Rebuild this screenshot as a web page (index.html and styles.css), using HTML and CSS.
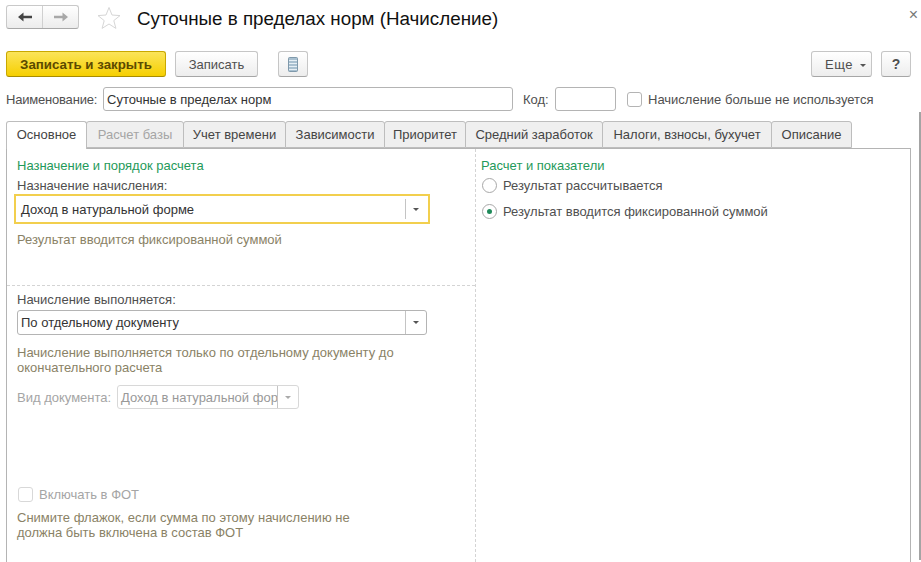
FILE: index.html
```html
<!DOCTYPE html>
<html lang="ru">
<head>
    <meta charset="UTF-8">
    <meta name="viewport" content="width=device-width, initial-scale=1.0">
    <title>Суточные в пределах норм (Начисление)</title>
    <link rel="stylesheet" href="styles.css">
</head>
<body>
    <div class="edge-bar"></div>
    <div class="form">
        <div class="title-row">
            <div class="nav-group">
                <button class="nav-btn">
                    <svg width="16" height="12" viewBox="0 0 16 12"><path d="M1 6 L6.5 1.5 V4.8 H15 V7.2 H6.5 V10.5 Z" fill="#444"/></svg>
                </button>
                <button class="nav-btn">
                    <svg width="16" height="12" viewBox="0 0 16 12"><path d="M15 6 L9.5 1.5 V4.8 H1 V7.2 H9.5 V10.5 Z" fill="#a8a8a8"/></svg>
                </button>
            </div>
            <svg class="star" width="24" height="24" viewBox="0 0 24 24"><path d="M12 1.5 L15 9 L23 9.6 L16.8 14.6 L18.9 22.4 L12 18 L5.1 22.4 L7.2 14.6 L1 9.6 L9 9 Z" fill="#fff" stroke="#d6d6d6"/></svg>
            <h1>Суточные в пределах норм (Начисление)</h1>
            <span class="close">×</span>
        </div>

        <div class="toolbar">
            <button class="btn btn-primary">Записать и закрыть</button>
            <button class="btn btn-save">Записать</button>
            <button class="btn btn-icon">
                <svg width="10" height="15" viewBox="0 0 10 15">
                    <rect x="0.5" y="0.5" width="9" height="14" rx="1" fill="#a9c0d0" stroke="#7f99ab"/>
                    <path d="M1 3.5 H9 M1 6.5 H9 M1 9.5 H9 M1 12.5 H9" stroke="#e6eff5"/>
                </svg>
            </button>
            <div class="spacer"></div>
            <button class="btn btn-more">Еще <span class="caret"></span></button>
            <button class="btn btn-help">?</button>
        </div>

        <div class="name-row">
            <label class="name-label">Наименование:</label>
            <input class="input input-name" type="text" value="Суточные в пределах норм">
            <label class="code-label">Код:</label>
            <input class="input input-code" type="text">
            <span class="box box-unused"></span>
            <span class="unused-text">Начисление больше не используется</span>
        </div>

        <div class="tabs">
            <div class="tab tab-active w1">Основное</div>
            <div class="tab tab-off w2">Расчет базы</div>
            <div class="tab w3">Учет времени</div>
            <div class="tab w4">Зависимости</div>
            <div class="tab w5">Приоритет</div>
            <div class="tab w6">Средний заработок</div>
            <div class="tab w7">Налоги, взносы, бухучет</div>
            <div class="tab w8">Описание</div>
        </div>

        <div class="panel">
            <div class="col-left">
                <div class="group-top">
                    <div class="heading">Назначение и порядок расчета</div>
                    <div class="field-label">Назначение начисления:</div>
                    <div class="select select-focus">
                        <span class="select-text">Доход в натуральной форме</span>
                        <span class="select-arrow"><span class="caret"></span></span>
                    </div>
                    <div class="hint hint-first">Результат вводится фиксированной суммой</div>
                </div>
                <div class="group-mid">
                    <div class="field-label">Начисление выполняется:</div>
                    <div class="select select-plain">
                        <span class="select-text">По отдельному документу</span>
                        <span class="select-arrow"><span class="caret"></span></span>
                    </div>
                    <div class="hint hint-doc">Начисление выполняется только по отдельному документу до окончательного расчета</div>
                    <div class="doc-row">
                        <span class="doc-label">Вид документа:</span>
                        <div class="select select-off">
                            <span class="select-text">Доход в натуральной форме</span>
                            <span class="select-arrow"><span class="caret"></span></span>
                        </div>
                    </div>
                    <div class="fot-row">
                        <span class="box box-off"></span>
                        <span class="fot-label">Включать в ФОТ</span>
                    </div>
                    <div class="hint hint-fot">Снимите флажок, если сумма по этому начислению не должна быть включена в состав ФОТ</div>
                </div>
            </div>
            <div class="col-right">
                <div class="heading">Расчет и показатели</div>
                <div class="radio-row radio-one"><span class="radio"></span>Результат рассчитывается</div>
                <div class="radio-row radio-two"><span class="radio radio-on"></span>Результат вводится фиксированной суммой</div>
            </div>
        </div>
    </div>
</body>
</html>
```

FILE: styles.css
```css
html, body {
    height: 100%;
    overflow: hidden;
}

body {
    margin: 0;
    background-color: white;
    font-family: "Liberation Sans", Arial, sans-serif;
    font-size: 13px;
    color: #4f4f4f;
}

.edge-bar {
    position: absolute;
    top: 112px;
    right: 0;
    bottom: 2px;
    width: 2px;
    background: #a4a4a4;
}

.form {
    padding: 5px 10px 0 6px;
}

.title-row {
    display: flex;
    align-items: center;
    height: 29px;
}

.nav-group {
    display: flex;
    width: 73px;
    height: 24px;
    margin-top: -5px;
    box-sizing: border-box;
    border: 1px solid #c9c9c9;
    border-bottom-color: #a8a8a8;
    border-radius: 3px;
    background: linear-gradient(#ffffff, #ececec);
}

.nav-btn {
    flex: 1;
    padding: 0;
    border: none;
    background: none;
    display: flex;
    align-items: center;
    justify-content: center;
}

.nav-btn + .nav-btn {
    border-left: 1px solid #d0d0d0;
}

.star {
    margin: -3px 0 0 18px;
}

h1 {
    margin: -1px 0 0 16px;
    font-size: 18.8px;
    font-weight: normal;
    color: #111;
}

.close {
    position: absolute;
    top: 6px;
    right: 3px;
    font-size: 16px;
    color: #777;
}

.toolbar {
    display: flex;
    margin-top: 17px;
    height: 26px;
}

.spacer {
    flex: 1;
}

.btn {
    box-sizing: border-box;
    height: 26px;
    padding: 0;
    border: 1px solid #c6c6c6;
    border-bottom-color: #a6a6a6;
    border-radius: 3px;
    background: linear-gradient(#ffffff, #ededed);
    font-family: inherit;
    font-size: 13px;
    color: #4f4f4f;
}

.btn-primary {
    width: 160px;
    border-color: #c9a800;
    border-bottom-color: #a88c00;
    background: linear-gradient(#fbe45a, #f6cf00);
    font-weight: bold;
    font-size: 13.3px;
    color: #5c4a00;
}

.btn-save {
    width: 83px;
    margin-left: 9px;
}

.btn-icon {
    width: 30px;
    margin-left: 20px;
    display: flex;
    align-items: center;
    justify-content: center;
}

.btn-more {
    width: 61px;
    padding-left: 13px;
    text-align: left;
    letter-spacing: 0.5px;
}

.btn-more .caret {
    margin-left: 3px;
}

.btn-help {
    width: 30px;
    margin-left: 9px;
    font-weight: bold;
    font-size: 14px;
}

.caret {
    display: inline-block;
    border-left: 3px solid transparent;
    border-right: 3px solid transparent;
    border-top: 3px solid #555;
    vertical-align: middle;
}

.name-row {
    display: flex;
    align-items: center;
    margin-top: 10px;
    height: 24px;
}

.name-label {
    width: 97px;
    letter-spacing: -0.2px;
}

.input {
    box-sizing: border-box;
    height: 24px;
    padding: 0 3px;
    border: 1px solid #b4b4b4;
    border-radius: 3px;
    font-family: inherit;
    font-size: 13px;
    color: #333;
}

.input-name {
    width: 410px;
}

.code-label {
    margin-left: 10px;
    width: 32px;
}

.input-code {
    width: 61px;
}

.box {
    box-sizing: border-box;
    width: 15px;
    height: 15px;
    border: 1px solid #b4b4b4;
    border-radius: 3px;
    background: white;
    flex: none;
}

.box-unused {
    margin-left: 11px;
}

.unused-text {
    margin-left: 6px;
}

.tabs {
    display: flex;
    margin-top: 10px;
    height: 27px;
}

.tab {
    box-sizing: border-box;
    height: 27px;
    margin-right: -1px;
    border: 1px solid #bdbdbd;
    border-radius: 3px 3px 0 0;
    background: #efefef;
    text-align: center;
    line-height: 25px;
    color: #444;
}

.tab-active {
    position: relative;
    z-index: 1;
    height: 28px;
    background: white;
    border-bottom: none;
}

.tab-off {
    color: #a5a5a5;
}

.w1 { width: 81px; }
.w2 { width: 98px; }
.w3 { width: 103px; }
.w4 { width: 100px; }
.w5 { width: 82px; }
.w6 { width: 138px; }
.w7 { width: 170px; }
.w8 { width: 81px; }

.panel {
    display: flex;
    box-sizing: border-box;
    height: 440px;
    border: 1px solid #b4b4b4;
}

.col-left {
    box-sizing: border-box;
    width: 469px;
    padding-top: 9px;
    border-right: 1px dashed #d4d4d4;
}

.col-right {
    flex: 1;
    padding: 9px 0 0 5px;
}

.heading {
    color: #1f9a5a;
    height: 15px;
    line-height: 15px;
}

.group-top {
    height: 127px;
    padding-left: 10px;
    border-bottom: 1px dashed #d4d4d4;
}

.field-label {
    height: 15px;
    line-height: 15px;
    margin-top: 5px;
}

.select {
    display: flex;
    box-sizing: border-box;
    align-items: center;
    border: 1px solid #b4b4b4;
    border-radius: 3px;
    background: white;
    color: #333;
}

.select-text {
    flex: 1;
    min-width: 0;
    padding-left: 3px;
    white-space: nowrap;
    overflow: hidden;
}

.select-arrow {
    display: flex;
    align-items: center;
    justify-content: center;
    width: 20px;
    height: 100%;
    border-left: 1px solid #c4c4c4;
}

.select-focus {
    width: 416px;
    height: 30px;
    margin: 1px 0 0 -3px;
    border: 2px solid #f2cf4e;
    border-radius: 0;
}

.select-focus .select-text {
    padding-left: 5px;
}

.select-focus .select-arrow {
    height: 20px;
    margin-right: 2px;
}

.select-plain {
    width: 410px;
    height: 25px;
    margin-top: 3px;
}

.select-off {
    width: 182px;
    height: 24px;
    border-color: #d8d8d8;
    color: #999;
}

.select-off .select-text {
    width: 0;
}

.select-off .caret {
    border-top-color: #aaa;
}

.hint {
    color: #8a8266;
    line-height: 15px;
}

.hint-first {
    margin-top: 8px;
}

.group-mid {
    padding: 1px 0 0 10px;
}

.hint-doc {
    width: 410px;
    margin-top: 10px;
}

.doc-row {
    display: flex;
    align-items: center;
    margin-top: 10px;
}

.doc-label {
    width: 100px;
    color: #a5a5a5;
}

.fot-row {
    display: flex;
    align-items: center;
    margin: 78px 0 0 1px;
    color: #a5a5a5;
}

.box-off {
    border-color: #d8d8d8;
}

.fot-label {
    margin-left: 6px;
}

.hint-fot {
    width: 350px;
    margin-top: 8px;
}

.radio-row {
    display: flex;
    align-items: center;
    height: 16px;
}

.radio-one {
    margin-top: 4px;
}

.radio-two {
    margin-top: 10px;
}

.radio {
    box-sizing: border-box;
    width: 15px;
    height: 15px;
    margin: 0 6px 0 1px;
    border: 1px solid #a8a8a8;
    border-radius: 50%;
    background: white;
}

.radio-on {
    border: 5px solid white;
    background: #1f8a5a;
    outline: 1px solid #a8a8a8;
    outline-offset: -1px;
}
```
